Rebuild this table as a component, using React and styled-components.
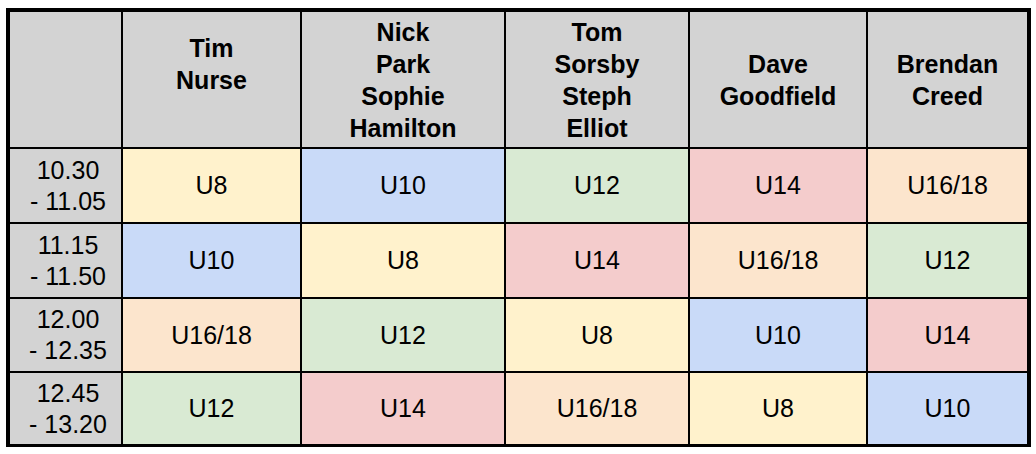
import styled, { createGlobalStyle } from 'styled-components';

const GlobalStyle = createGlobalStyle`
  body { margin: 0; background: #fff; font-family: "Liberation Sans", Arial, sans-serif; color: #000; }
`;

const TONES = {
  U8: '#fff2cc',
  U10: '#c9daf8',
  U12: '#d9ead3',
  U14: '#f4cccc',
  'U16/18': '#fce5cd',
};

const Schedule = styled.div`
  display: grid; width: fit-content; margin: 8px 0 0 6px;
  grid-template-columns: 111px 177px 202px 182px 176px 159px;
  grid-template-rows: 135px 73px 73px 72px 71px;
  gap: 2px; background: #000;
  border: solid #000; border-width: 4px 4px 3px 4px;`;

const Cell = styled.div`
  display: flex; align-items: center; justify-content: center; text-align: center;
  font-size: 25px; line-height: 31px;
  background: ${p => p.$tone || '#d3d3d3'};`;

const HeadCell = styled(Cell)`
  font-weight: 700; line-height: 32px; white-space: pre-line;
  ${p => p.$lift && 'padding-bottom: 32px;'}`;

const TimeCell = styled(Cell)`
  flex-direction: column; padding-left: 5px;`;

const coaches = [
  { name: 'Tim\nNurse', lift: true },
  { name: 'Nick\nPark\nSophie\nHamilton' },
  { name: 'Tom\nSorsby\nSteph\nElliot' },
  { name: 'Dave\nGoodfield' },
  { name: 'Brendan\nCreed' },
];

const slots = [
  { from: '10.30', to: '11.05', groups: ['U8', 'U10', 'U12', 'U14', 'U16/18'] },
  { from: '11.15', to: '11.50', groups: ['U10', 'U8', 'U14', 'U16/18', 'U12'] },
  { from: '12.00', to: '12.35', groups: ['U16/18', 'U12', 'U8', 'U10', 'U14'] },
  { from: '12.45', to: '13.20', groups: ['U12', 'U14', 'U16/18', 'U8', 'U10'] },
];

export default function App() {
  return (
    <>
      <GlobalStyle />
      <Schedule>
        <HeadCell />
        {coaches.map(c => <HeadCell key={c.name} $lift={c.lift}>{c.name}</HeadCell>)}
        {slots.map(s => [
          <TimeCell key={s.from}><span>{s.from}</span><span>- {s.to}</span></TimeCell>,
          ...s.groups.map((g, i) => <Cell key={s.from + i} $tone={TONES[g]}>{g}</Cell>),
        ])}
      </Schedule>
    </>
  );
}
